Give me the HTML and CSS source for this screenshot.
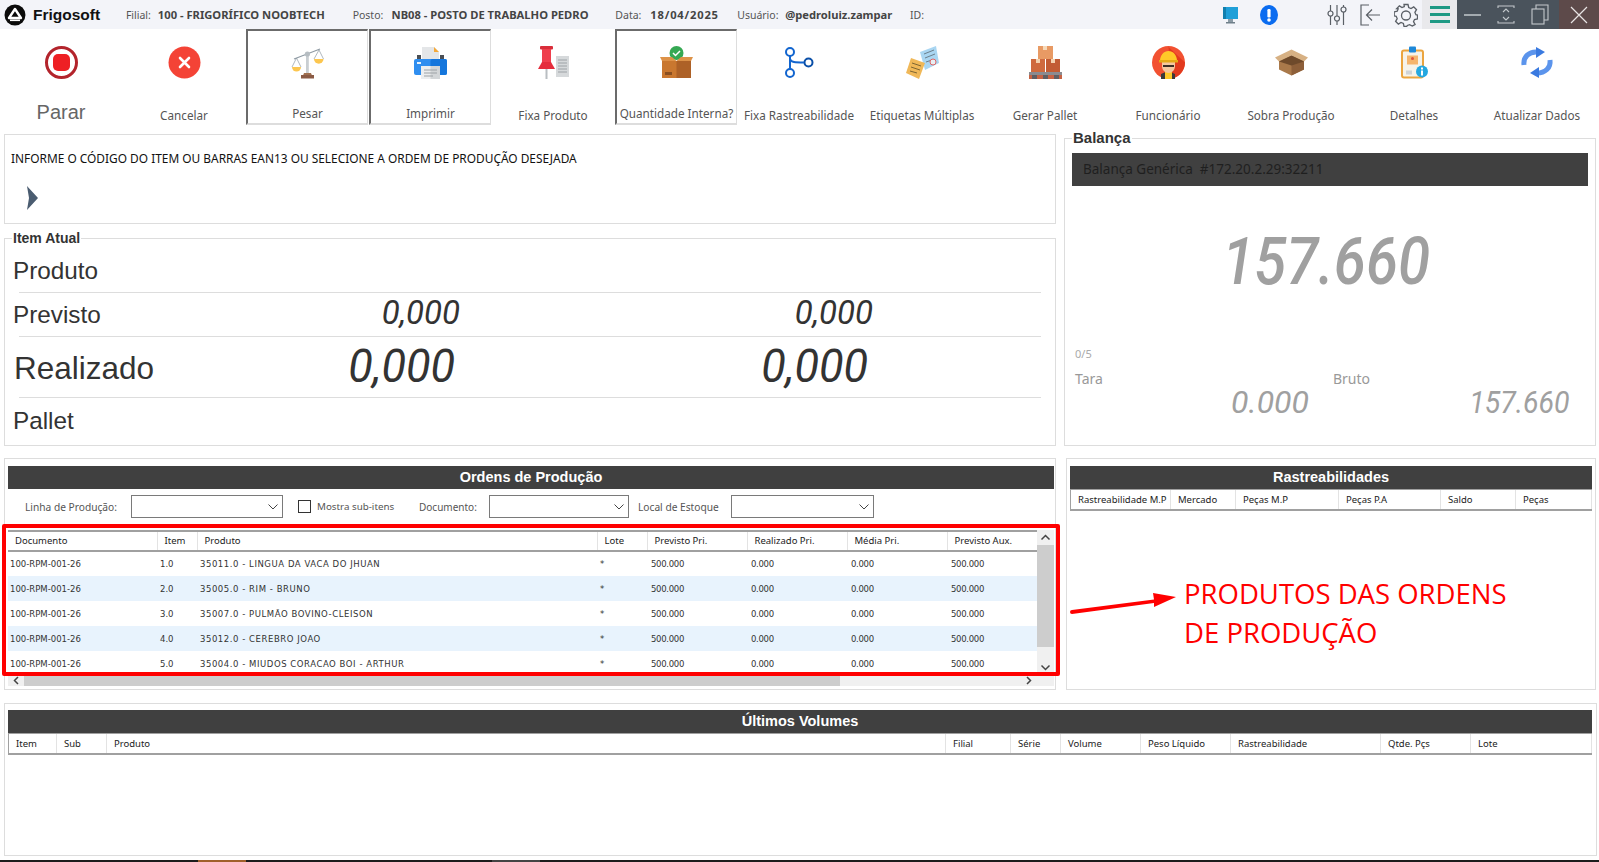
FILE: index.html
```html
<!DOCTYPE html>
<html lang="pt-BR">
<head>
    <meta charset="UTF-8">
    <meta name="viewport" content="width=device-width, initial-scale=1.0">
    <title>Frigosoft</title>
    <link rel="stylesheet" href="styles.css">
</head>
<body>

<header class="topbar">
    <svg class="logo" width="22" height="22" viewBox="0 0 22 22"><circle cx="11" cy="11" r="10.5" fill="#0b0b0b"/><path d="M11 5 L17 14 H5 Z" fill="none" stroke="#fff" stroke-width="2.4" stroke-linejoin="round"/><rect x="6" y="15.5" width="10" height="1.6" fill="#fff"/></svg>
    <span class="brand">Frigosoft</span>
    <span class="info info-filial">Filial:</span><b class="val val-filial">100 - FRIGORÍFICO NOOBTECH</b>
    <span class="info info-posto">Posto:</span><b class="val val-posto">NB08 - POSTO DE TRABALHO PEDRO</b>
    <span class="info info-data">Data:</span><b class="val val-data">18/04/2025</b>
    <span class="info info-user">Usuário:</span><b class="val val-user">@pedroluiz.zampar</b>
    <span class="info info-id">ID:</span>

    <div class="status-icons">
        <svg width="17" height="18" viewBox="0 0 17 18"><rect x="1" y="1" width="15" height="12" fill="#1f9fd8"/><rect x="1" y="1" width="3" height="12" fill="#117fae"/><rect x="6" y="13" width="5" height="3" fill="#8a9aa5"/><rect x="4" y="16" width="9" height="1.5" fill="#6f7f8a"/></svg>
        <svg class="alert" width="18" height="20" viewBox="0 0 18 20"><ellipse cx="9" cy="10" rx="9" ry="10" fill="#0b6cf0"/><rect x="7.4" y="4" width="3.2" height="8.5" rx="1.2" fill="#fff"/><circle cx="9" cy="15" r="1.8" fill="#fff"/></svg>
    </div>
    <div class="tool-icons">
        <svg width="20" height="22" viewBox="0 0 20 22" fill="none" stroke="#5a5f66" stroke-width="1.2"><path d="M3.5 1v6M3.5 12v9M10 1v11M10 17v4M16.500 1v2M16.500 8v13"/><circle cx="3.500" cy="9.500" r="2.500"/><circle cx="10" cy="14.500" r="2.500"/><circle cx="16.500" cy="5.500" r="2.500"/></svg>
        <svg width="21" height="22" viewBox="0 0 21 22" fill="none" stroke="#5a5f66" stroke-width="1.2"><path d="M9 1H1v20h8M20 11H7M12 5.500L6.500 11l5.500 5.500"/></svg>
        <svg width="24" height="24" viewBox="0 0 24 24" fill="none" stroke="#5a5f66" stroke-width="1.300"><path d="M10 1.500h4l.7 3 2.300 1 2.700-1.600 2.800 2.800L20.900 9.400l1 2.300 1.600.3v4l-3 .5-1 2.200 1.600 2.700-2.800 1.600-2.700-1.400-2.300.9-.6 1H10l-.6-3-2.400-1-2.600 1.600-2.800-2.800 1.600-2.700-1-2.300-2-.5v-4l3-.6 1-2.300L2.600 5.700l2.800-2.800 2.600 1.600 2.300-1z"/><circle cx="12" cy="12.500" r="4.500"/></svg>
        <div class="menu-btn"><i></i><i></i><i></i></div>
    </div>
    <div class="win-btns">
        <svg width="34" height="29" viewBox="1 0 34 29"><path d="M8 15h17" stroke="#c3c8cc" stroke-width="1.500"/></svg>
        <svg width="34" height="29" viewBox="2 0 34 29" fill="none" stroke="#c3c8cc" stroke-width="1.100"><path d="M9 8V6h16v2M9 21v2h16v-2M14 12l3-3 3 3M14 17l3 3 3-3"/></svg>
        <svg width="34" height="29" viewBox="2 0 34 29" fill="none" stroke="#c3c8cc" stroke-width="1.100"><rect x="9" y="9" width="12" height="15"/><path d="M13 9V5h12v15h-4"/></svg>
        <div class="win-close"><svg width="18" height="18" viewBox="0 0 18 18"><path d="M1 1l16 16M17 1L1 17" stroke="#e8e4e4" stroke-width="1.200"/></svg></div>
    </div>
</header>

<nav class="toolbar">
    <div class="tbtn">
        <svg width="33" height="33" viewBox="0 0 33 33"><circle cx="16.500" cy="16.500" r="15" fill="#fff" stroke="#b3242c" stroke-width="3"/><rect x="8" y="8" width="17" height="17" rx="5" fill="#ee2024"/></svg>
        <span class="tlabel tlabel-big">Parar</span>
    </div>
    <div class="tbtn">
        <svg width="33" height="33" viewBox="0 0 33 33"><circle cx="16.500" cy="16.500" r="16" fill="#f44336"/><path d="M12 12l9 9M21 12l-9 9" stroke="#fff" stroke-width="2.600" stroke-linecap="round"/></svg>
        <span class="tlabel">Cancelar</span>
    </div>
    <div class="tbtn tbtn-flat">
        <svg width="33" height="33" viewBox="0 0 33 33"><path d="M3 13L29 3" stroke="#8e9aa3" stroke-width="1.200"/><path d="M5.500 12L1 21M5.500 12L10 21M28 4l-5 9M28 4l4.500 9" stroke="#8e9aa3" stroke-width=".7" fill="none"/><path d="M1 21h9a4.500 4.500 0 0 1-9 0z" fill="#fcc64f"/><path d="M23 13h9.500a4.700 4.700 0 0 1-9.500 0z" fill="#fcc64f"/><rect x="15" y="7" width="2.800" height="20" fill="#c9ced2"/><circle cx="16.400" cy="8" r="2.600" fill="#b6bdc2"/><path d="M13 27h7l1 2.500H12z" fill="#a07050"/><rect x="10" y="29" width="13" height="3.500" fill="#8a5a44"/></svg>
        <span class="tlabel">Pesar</span>
    </div>
    <div class="tbtn tbtn-flat">
        <svg width="33" height="33" viewBox="0 0 33 33"><path d="M8 1h12l5 5v7H8z" fill="#e4e6e8"/><path d="M20 1l5 5h-5z" fill="#f5a93a"/><rect x="3" y="9" width="4" height="6" fill="#4a4f55"/><rect x="26" y="9" width="4" height="6" fill="#4a4f55"/><rect x="0" y="13" width="33" height="16" rx="2" fill="#2f8ef0"/><rect x="16.500" y="13" width="16.500" height="16" rx="2" fill="#1576dc"/><rect x="3" y="16" width="4" height="2" fill="#e8f2fb"/><rect x="7" y="20" width="19" height="13" fill="#eceeef"/><rect x="16.500" y="20" width="9.500" height="13" fill="#d3d6d8"/><path d="M10 24h13M10 27h13M10 30h9" stroke="#9da2a6" stroke-width="1"/></svg>
        <span class="tlabel">Imprimir</span>
    </div>
    <div class="tbtn">
        <svg width="33" height="33" viewBox="0 0 33 33"><rect x="19" y="10" width="13" height="21" fill="#d6d9db"/><path d="M21 14h9M21 17h9M21 20h9M21 23h9M21 26h9" stroke="#9da2a6"/><rect x="3" y="0" width="13" height="3.500" rx="1" fill="#d92d3a"/><rect x="5" y="3" width="9" height="13" fill="#ef3f4d"/><path d="M1 23l4-7h9l4 7z" fill="#e52d3c"/><rect x="8.500" y="23" width="2" height="10" fill="#b9bec2"/></svg>
        <span class="tlabel">Fixa Produto</span>
    </div>
    <div class="tbtn tbtn-flat">
        <svg width="33" height="33" viewBox="0 0 33 33"><circle cx="16.500" cy="7" r="7" fill="#35a853"/><path d="M13 7l2.500 2.500L20 5" fill="none" stroke="#fff" stroke-width="1.500"/><rect x="2" y="15" width="29" height="17" fill="#c9772f"/><rect x="16.500" y="15" width="14.500" height="17" fill="#ad6127"/><path d="M2 15L0 11h12l4.500 4zM31 15l2-4H21l-4.500 4z" fill="#dd9248"/><rect x="5" y="26" width="7" height="3" fill="#8a4f20"/></svg>
        <span class="tlabel">Quantidade Interna?</span>
    </div>
    <div class="tbtn">
        <svg width="30" height="31" viewBox="0 0 30 31" fill="none" stroke="#1265cf" stroke-width="2"><circle cx="6" cy="5" r="4"/><circle cx="6" cy="26" r="4"/><circle cx="24.500" cy="15.500" r="4" stroke="#0a4fa8"/><path d="M6 9v13M6 12c1 3.500 5 3.500 14 3.500"/></svg>
        <span class="tlabel">Fixa Rastreabilidade</span>
    </div>
    <div class="tbtn">
        <svg width="33" height="33" viewBox="0 0 33 33"><path d="M14 6L30 0l3 17-14 7z" fill="#a9d6f2"/><path d="M18 8l10-4M19 12l10-4M20 16l6-2" stroke="#6c7f8c"/><circle cx="27" cy="16" r="3" fill="#e8eef2" stroke="#d66"/><path d="M5 12l14 5-6 16-13-6z" fill="#f0b858"/><path d="M6 17l9 3M5 21l9 3M4 25l7 2" stroke="#7d6532"/></svg>
        <span class="tlabel">Etiquetas Múltiplas</span>
    </div>
    <div class="tbtn">
        <svg width="33" height="33" viewBox="0 0 33 33"><rect x="9" y="0" width="15" height="13" fill="#e89a64"/><rect x="14" y="0" width="4" height="4" fill="#f6d9b9"/><rect x="2" y="13" width="14" height="13" fill="#cf6a3e"/><rect x="17" y="13" width="14" height="13" fill="#c25c34"/><rect x="7" y="13" width="4" height="4" fill="#f3d2b0"/><rect x="22" y="13" width="4" height="4" fill="#f3d2b0"/><rect x="0" y="26" width="33" height="3" fill="#8b8b90"/><rect x="0" y="29" width="33" height="4" fill="#c66345"/><rect x="3" y="29" width="5" height="4" fill="#5f5f63"/><rect x="14" y="29" width="5" height="4" fill="#5f5f63"/><rect x="25" y="29" width="5" height="4" fill="#5f5f63"/></svg>
        <span class="tlabel">Gerar Pallet</span>
    </div>
    <div class="tbtn">
        <svg width="33" height="33" viewBox="0 0 33 33"><ellipse cx="16.500" cy="16.500" rx="16.500" ry="16.500" fill="#f25131"/><path d="M16.500 1L33 16.500a16.500 16.500 0 0 1-14 16z" fill="#e23a1e"/><path d="M9 33v-5l7-3 7 3v5z" fill="#3a3a3a"/><rect x="13" y="26" width="7" height="7" fill="#ffc928"/><path d="M10 15h13v5c0 4-3 7-6.500 7S10 24 10 20z" fill="#f5c79e"/><path d="M11 19h11v2H11z" fill="#3b2d25"/><path d="M8 15c0-6 4-10 8.500-10S25 9 25 15z" fill="#ffc928"/><rect x="7" y="14" width="19" height="2.500" fill="#e5a915"/></svg>
        <span class="tlabel">Funcionário</span>
    </div>
    <div class="tbtn">
        <svg width="33" height="26" viewBox="0 0 33 26"><path d="M16.500 6L29 10v10l-12.500 6L4 20V10z" fill="#a9794a"/><path d="M16.500 10v16L29 20V10z" fill="#8d5f39"/><path d="M16.500 0L33 8l-4 4-12.500-6L4 12 0 8z" fill="#d7b184"/><path d="M16.500 6L4 12l12.500 4L29 12z" fill="#6e4a2b"/></svg>
        <span class="tlabel">Sobra Produção</span>
    </div>
    <div class="tbtn">
        <svg width="27" height="32" viewBox="0 0 27 32"><rect x="1" y="4" width="21" height="27" rx="2" fill="#f6f3ea" stroke="#eba53f" stroke-width="2"/><rect x="8" y="0" width="7" height="6" rx="1" fill="#1e88d8"/><rect x="6" y="9" width="11" height="9" fill="#f5b56d"/><circle cx="11.500" cy="12" r="1.500" fill="#e0533a"/><path d="M5 24h6v4H5z" fill="#cfd3d6"/><circle cx="21" cy="25" r="6" fill="#25a8e0"/><rect x="20" y="24" width="2" height="5" fill="#fff"/><rect x="20" y="21" width="2" height="2" fill="#fff"/></svg>
        <span class="tlabel">Detalhes</span>
    </div>
    <div class="tbtn">
        <svg width="33" height="29" viewBox="0 0 33 29" fill="none"><path d="M3 17C2 9 8 3 17 4" stroke="#5b94ec" stroke-width="5"/><path d="M15 -1l9 5-9 6z" fill="#3a7ae0"/><path d="M29 12c1 8-5 13-13 13" stroke="#5b94ec" stroke-width="5"/><path d="M18 30l-9-5 9-6z" fill="#3a7ae0"/></svg>
        <span class="tlabel">Atualizar Dados</span>
    </div>
</nav>

<section class="row-top">
    <div class="col-left">
        <div class="panel panel-code">
            <p class="code-msg">INFORME O CÓDIGO DO ITEM OU BARRAS EAN13 OU SELECIONE A ORDEM DE PRODUÇÃO DESEJADA</p>
            <svg class="chevron" width="12" height="24" viewBox="0 0 12 24"><path d="M0 0l11 12L0 24l2-12z" fill="#4a5c70"/></svg>
        </div>
        <fieldset class="panel item-atual">
            <legend>Item Atual</legend>
            <div class="item-row row-produto"><span class="item-name">Produto</span></div>
            <hr class="sep">
            <div class="item-row row-previsto">
                <span class="item-name">Previsto</span>
                <span class="lcd lcd-mid">0,000</span>
                <span class="lcd lcd-mid">0,000</span>
            </div>
            <hr class="sep">
            <div class="item-row row-realizado">
                <span class="item-name name-big">Realizado</span>
                <span class="lcd lcd-big">0,000</span>
                <span class="lcd lcd-big">0,000</span>
            </div>
            <hr class="sep">
            <div class="item-row row-pallet"><span class="item-name">Pallet</span></div>
        </fieldset>
    </div>

    <fieldset class="panel balanca">
        <legend>Balança</legend>
        <div class="scale-bar">Balança Genérica&nbsp; #172.20.2.29:32211</div>
        <div class="scale-main"><span class="lcd-scale">157.660</span></div>
        <div class="scale-count">0/5</div>
        <div class="scale-labels"><span>Tara</span><span class="bruto">Bruto</span></div>
        <div class="scale-values"><span class="lcd-small lcd-tara">0.000</span><span class="lcd-small lcd-bruto">157.660</span></div>
    </fieldset>
</section>

<section class="row-mid">
    <div class="panel ordens">
        <h3 class="dark-title">Ordens de Produção</h3>
        <div class="filters">
            <label class="f-linha">Linha de Produção:</label>
            <div class="fake-select sel-linha"><svg width="10" height="6" viewBox="0 0 10 6"><path d="M.5.5L5 5 9.500.5" fill="none" stroke="#444"/></svg></div>
            <span class="fake-check"></span>
            <label class="f-mostra">Mostra sub-itens</label>
            <label class="f-doc">Documento:</label>
            <div class="fake-select sel-doc"><svg width="10" height="6" viewBox="0 0 10 6"><path d="M.5.5L5 5 9.500.5" fill="none" stroke="#444"/></svg></div>
            <label class="f-local">Local de Estoque</label>
            <div class="fake-select sel-local"><svg width="10" height="6" viewBox="0 0 10 6"><path d="M.5.5L5 5 9.500.5" fill="none" stroke="#444"/></svg></div>
        </div>
        <div class="grid-wrap">
            <div class="grid-view">
                <table class="grid">
                    <colgroup><col class="c-doc"><col class="c-item"><col class="c-prod"><col class="c-lote"><col class="c-num"><col class="c-num"><col class="c-num"><col class="c-aux"></colgroup>
                    <thead>
                        <tr><th>Documento</th><th>Item</th><th>Produto</th><th>Lote</th><th>Previsto Pri.</th><th>Realizado Pri.</th><th>Média Pri.</th><th>Previsto Aux.</th></tr>
                    </thead>
                    <tbody>
                        <tr><td>100-RPM-001-26</td><td>1.0</td><td>35011.0 - LINGUA DA VACA DO JHUAN</td><td>*</td><td>500.000</td><td>0.000</td><td>0.000</td><td>500.000</td></tr>
                        <tr><td>100-RPM-001-26</td><td>2.0</td><td>35005.0 - RIM - BRUNO</td><td>*</td><td>500.000</td><td>0.000</td><td>0.000</td><td>500.000</td></tr>
                        <tr><td>100-RPM-001-26</td><td>3.0</td><td>35007.0 - PULMÃO BOVINO-CLEISON</td><td>*</td><td>500.000</td><td>0.000</td><td>0.000</td><td>500.000</td></tr>
                        <tr><td>100-RPM-001-26</td><td>4.0</td><td>35012.0 - CEREBRO JOAO</td><td>*</td><td>500.000</td><td>0.000</td><td>0.000</td><td>500.000</td></tr>
                        <tr><td>100-RPM-001-26</td><td>5.0</td><td>35004.0 - MIUDOS CORACAO BOI - ARTHUR</td><td>*</td><td>500.000</td><td>0.000</td><td>0.000</td><td>500.000</td></tr>
                    </tbody>
                </table>
            </div>
            <div class="vscroll">
                <svg width="17" height="15" viewBox="0 0 17 15"><path d="M4.500 9.500L8.500 5.500l4 4" fill="none" stroke="#444" stroke-width="1.500"/></svg>
                <div class="vthumb"></div>
                <svg class="arrow-down" width="17" height="15" viewBox="0 0 17 15"><path d="M4.500 5.500L8.500 9.500l4-4" fill="none" stroke="#444" stroke-width="1.500"/></svg>
            </div>
        </div>
        <div class="hscroll">
            <svg width="16" height="11" viewBox="0 0 16 11"><path d="M10 2L6.500 5.500 10 9" fill="none" stroke="#444" stroke-width="1.500"/></svg>
            <div class="hthumb"></div>
            <svg class="arrow-right" width="16" height="11" viewBox="0 0 16 11"><path d="M6 2l3.500 3.500L6 9" fill="none" stroke="#444" stroke-width="1.500"/></svg>
        </div>
    </div>

    <div class="panel rastreab">
        <h3 class="dark-title">Rastreabilidades</h3>
        <div class="col-head cols-rastreab">
            <span>Rastreabilidade M.P</span><span>Mercado</span><span>Peças M.P</span><span>Peças P.A</span><span>Saldo</span><span>Peças</span>
        </div>
    </div>
</section>

<section class="panel volumes">
    <h3 class="dark-title">Últimos Volumes</h3>
    <div class="col-head cols-volumes">
        <span>Item</span><span>Sub</span><span>Produto</span><span>Filial</span><span>Série</span><span>Volume</span><span>Peso Líquido</span><span>Rastreabilidade</span><span>Qtde. Pçs</span><span>Lote</span>
    </div>
</section>

<footer class="taskbar"><i class="task-orange"></i><i class="task-grey"></i></footer>

<div class="red-box"></div>
<svg class="red-arrow" width="110" height="26" viewBox="0 0 110 26"><path d="M3 19L85 8.500 84 2l23 4-22 10v-4L3 23a2 2 0 0 1 0-4z" fill="#f00"/></svg>
<div class="red-note">PRODUTOS DAS ORDENS<br>DE PRODUÇÃO</div>

</body>
</html>
```

FILE: styles.css
```css
* {
    box-sizing: border-box;
}
body {
    margin: 0;
    width: 1599px;
    height: 862px;
    overflow: hidden;
    position: relative;
    display: flex;
    flex-direction: column;
    background: #fff;
    font-family: "Noto Sans", sans-serif;
    color: #333;
}
h3, p {
    margin: 0;
}

/* top bar */
.topbar {
    height: 29px;
    background: #f3f4f9;
    display: flex;
    align-items: center;
    font-size: 10.5px;
    color: #555;
    white-space: nowrap;
}
.logo {
    margin-left: 4px;
}
.brand {
    margin-left: 7px;
    width: 93px;
    font: bold 15.5px "Liberation Sans", sans-serif;
    color: #111;
}
.val {
    color: #444;
    font-size: 11.2px;
}
.info-filial { width: 32px; }
.val-filial { width: 195px; }
.info-posto { width: 39px; }
.val-posto { width: 224px; }
.info-data { width: 35px; }
.val-data {
    width: 87px;
    letter-spacing: .8px;
}
.info-user { width: 48px; }
.val-user { width: 125px; }
.info-id { width: 20px; }
.status-icons {
    margin-left: 292px;
    display: flex;
    align-items: center;
    gap: 21px;
}
.tool-icons {
    margin-left: 49px;
    display: flex;
    align-items: center;
    gap: 13px;
}
.menu-btn {
    width: 35px;
    height: 29px;
    margin-left: -9px;
    background: #e9e9ec;
    display: flex;
    flex-direction: column;
    justify-content: center;
    align-items: center;
    gap: 4px;
}
.menu-btn i {
    width: 20px;
    height: 3px;
    background: #1f9a85;
}
.win-btns {
    display: flex;
    height: 29px;
    background: #4a535c;
    margin-left: auto;
}
.win-close {
    width: 40px;
    background: #5d4a4a;
    display: flex;
    align-items: center;
    justify-content: center;
}

/* toolbar */
.toolbar {
    display: grid;
    grid-template-columns: repeat(13, 123px);
    height: 96px;
}
.tbtn {
    display: flex;
    flex-direction: column;
    align-items: center;
    position: relative;
    padding-top: 17px;
    margin-right: 1px;
}
.tbtn svg {
    height: 33px;
}
.tlabel {
    position: absolute;
    left: 0;
    right: 0;
    top: 78px;
    text-align: center;
    font-size: 11.7px;
    color: #555;
    white-space: nowrap;
    line-height: 16px;
}
.tlabel-big {
    top: 70px;
    font: 20px/26px "Liberation Sans", sans-serif;
    color: #666;
}
.tbtn-flat {
    border-top: 2px solid #6b6b6b;
    border-left: 2px solid #6b6b6b;
    border-right: 1px solid #ddd;
    border-bottom: 2px solid #ddd;
    padding-top: 15px;
}
.tbtn-flat .tlabel {
    top: 74px;
}

/* panels */
.panel {
    border: 1px solid #ddd;
    background: #fff;
}
.row-top {
    display: flex;
    margin-left: 4px;
    margin-top: 4px;
    height: 317px;
}
.col-left {
    width: 1052px;
    padding-top: 5px;
}
.panel-code {
    height: 90px;
    padding: 15px 6px 0;
}
.code-msg {
    font-size: 11.9px;
    line-height: 16px;
    color: #111;
}
.chevron {
    display: block;
    margin: 20px 0 0 16px;
}
fieldset.panel {
    margin: 0;
    min-width: 0;
}
fieldset.panel legend {
    padding: 0 1px;
    font: bold 14px/16px "Liberation Sans", sans-serif;
    color: #333;
}
.item-atual {
    height: 216px;
    margin-top: 6px !important;
    padding: 0 14px 0 8px;
}
.item-atual legend {
    margin-left: -1px;
}
.sep {
    border: 0;
    border-top: 1px solid #ddd;
    margin: 0 0 0 6px;
}
.item-row {
    display: grid;
    grid-template-columns: 447px 413px;
    align-items: center;
    position: relative;
}
.row-produto { height: 46px; }
.row-previsto { height: 43px; }
.row-realizado { height: 60px; }
.row-pallet { height: 46px; }
.item-name {
    position: absolute;
    left: 0;
    font: 24.3px/28px "Liberation Sans", sans-serif;
    color: #333;
}
.row-produto .item-name { margin-top: 3px; }
.row-previsto .item-name { margin-top: 1px; }
.name-big {
    font-size: 31.5px;
    line-height: 36px;
    left: 1px;
    margin-top: 1px;
}
.lcd {
    font-family: Roboto, sans-serif;
    font-style: italic;
    font-weight: 400;
    color: #333;
    text-align: right;
}
.lcd-mid {
    font-size: 33px;
    line-height: 34px;
    margin-top: -3px;
}
.lcd-big {
    font-size: 46px;
    line-height: 50px;
    transform: scaleX(.98);
    transform-origin: right center;
    padding-right: 5px;
    margin-top: -2px;
}

.balanca {
    width: 532px;
    margin-left: 8px !important;
    padding: 6px 7px 0;
}
.balanca legend {
    margin-left: 0;
    font-size: 15px !important;
    line-height: 18px !important;
}
.scale-bar {
    height: 33px;
    background: #404040;
    color: #1f1f1f;
    font-size: 13.5px;
    line-height: 33px;
    padding-left: 11px;
}
.scale-main {
    height: 160px;
    display: flex;
    justify-content: center;
    padding-top: 43px;
}
.lcd-scale {
    font: italic 500 66px/66px Roboto, sans-serif;
    color: #a0a0a0;
    transform: scaleX(.88);
    margin-left: -8px;
}
.scale-count {
    font-size: 11px;
    line-height: 16px;
    color: #aaa;
    padding-left: 3px;
}
.scale-labels {
    display: flex;
    font-size: 14px;
    line-height: 18px;
    color: #999;
    padding-left: 3px;
    margin-top: 8px;
}
.bruto {
    margin-left: 230px;
}
.scale-values {
    display: flex;
    height: 32px;
    margin-top: -2px;
}
.lcd-small {
    font: italic 400 32px/32px Roboto, sans-serif;
    color: #a0a0a0;
}
.lcd-tara {
    margin-left: 159px;
}
.lcd-bruto {
    margin-left: 154px;
    transform: scaleX(.89);
}

/* orders */
.row-mid {
    display: flex;
    margin: 12px 0 0 4px;
    height: 232px;
}
.ordens {
    width: 1052px;
    padding: 7px 1px 0 3px;
}
.dark-title {
    height: 23px;
    background: #404040;
    color: #fff;
    font: bold 14.5px/22px "Liberation Sans", sans-serif;
    text-align: center;
}
.filters {
    display: flex;
    align-items: center;
    height: 41px;
    padding-bottom: 6px;
    font-size: 10.2px;
    color: #555;
    white-space: nowrap;
}
.f-linha {
    margin-left: 17px;
    width: 106px;
}
.fake-select {
    height: 23px;
    border: 1px solid #7a7a7a;
    display: flex;
    align-items: center;
    justify-content: flex-end;
    padding-right: 4px;
}
.sel-linha { width: 152px; }
.sel-doc { width: 140px; }
.sel-local { width: 143px; }
.fake-check {
    width: 13px;
    height: 13px;
    border: 1px solid #333;
    margin-left: 15px;
}
.f-mostra {
    margin-left: 6px;
    width: 102px;
    font-size: 9.8px;
}
.f-doc {
    width: 70px;
    font-size: 10px;
}
.f-local {
    margin-left: 9px;
    width: 93px;
}
.grid-wrap {
    display: flex;
    height: 145px;
}
.grid-view {
    width: 1029px;
    overflow: hidden;
}
.grid {
    width: 1029px;
    border-collapse: collapse;
    table-layout: fixed;
    font-size: 9.5px;
}
.c-doc { width: 149px; }
.c-item { width: 40px; }
.c-prod { width: 400px; }
.c-lote { width: 50px; }
.c-num { width: 100px; }
.c-aux { width: 90px; }
.grid th {
    height: 20px;
    padding: 0 0 2px 7px;
    text-align: left;
    font-weight: 400;
    color: #222;
    border-top: 2px solid #a0a0a0;
    border-bottom: 2px solid #a0a0a0;
    border-right: 1px solid #e3e3e3;
}
.grid td {
    height: 25px;
    padding: 0 0 0 3px;
    font: 8.5px "DejaVu Sans", sans-serif;
    color: #333;
    white-space: nowrap;
}
.grid td:first-child {
    padding-left: 2px;
}
.grid td:nth-child(3) {
    letter-spacing: .55px;
}
.grid td:nth-child(n+5) {
    letter-spacing: -.3px;
    padding-left: 4px;
}
.grid tbody tr:nth-child(even) {
    background: #e8f3fd;
}
.vscroll {
    width: 17px;
    background: #f0f0f0;
    display: flex;
    flex-direction: column;
    align-items: center;
}
.vthumb {
    width: 17px;
    height: 102px;
    background: #cdcdcd;
}
.arrow-down {
    margin-top: auto;
}
.hscroll {
    height: 11px;
    background: #f0f0f0;
    display: flex;
    align-items: center;
}
.hthumb {
    width: 816px;
    height: 11px;
    background: #cdcdcd;
}
.arrow-right {
    margin-left: auto;
    margin-right: 17px;
}

/* right panel and bottom */
.rastreab {
    width: 530px;
    margin-left: 10px;
    padding: 7px 3px 0;
}
.col-head {
    display: grid;
    height: 22px;
    align-items: center;
    font-size: 9.5px;
    color: #222;
    border-top: 1px solid #a0a0a0;
    border-bottom: 2px solid #a0a0a0;
    border-left: 1px solid #a0a0a0;
}
.col-head span {
    height: 100%;
    line-height: 20px;
    padding-left: 7px;
    border-right: 1px solid #e3e3e3;
    white-space: nowrap;
    overflow: hidden;
}
.cols-rastreab {
    grid-template-columns: 100px 65px 103px 102px 75px 1fr;
}
.volumes {
    margin: 13px 2px 0 4px;
    height: 153px;
    padding: 6px 4px 0 3px;
}
.cols-volumes {
    grid-template-columns: 48px 50px 839px 65px 50px 80px 90px 150px 90px 1fr;
}
.taskbar {
    margin-top: auto;
    height: 2px;
    background: #1c1c1c;
    display: flex;
}
.task-orange {
    margin-left: 198px;
    width: 48px;
    background: #a0602a;
}
.task-grey {
    margin-left: 246px;
    width: 48px;
    background: #444;
}

/* annotation on top of the screenshot */
.red-box {
    position: absolute;
    left: 2px;
    top: 524px;
    width: 1058px;
    height: 152px;
    border: 4px solid #f00;
    border-radius: 2px;
}
.red-arrow {
    position: absolute;
    left: 1069px;
    top: 591px;
}
.red-note {
    position: absolute;
    left: 1184px;
    top: 575px;
    font: 27.5px/38.5px "Open Sans", sans-serif;
    color: #f00;
    white-space: nowrap;
}
```
